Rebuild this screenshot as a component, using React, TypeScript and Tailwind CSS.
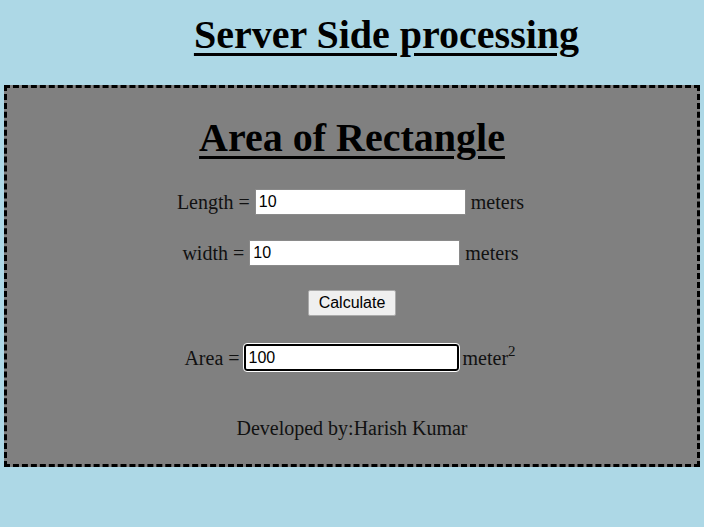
export default function App() {
  return (
    <div className="min-h-[527px] bg-[#add8e6] pt-[12px] pb-10 font-['Liberation_Serif',serif] text-black">
      <h1 className="pl-[69px] text-center text-[40px] font-bold leading-[46px] underline decoration-[3px] underline-offset-[5px]">
        Server Side processing
      </h1>

      <div className="mx-1 mt-[27px] h-[382px] border-[3px] border-dashed border-black bg-[#808080] pt-[27px]">
        <h2 className="text-center text-[40px] font-bold leading-[46px] underline decoration-[3px] underline-offset-[5px]">
          Area of Rectangle
        </h2>

        <div className="mt-[28px] flex h-[26px] items-center justify-center gap-[5px] pr-[3px] text-[20px] text-[#111]">
          <span>Length =</span>
          <input
            defaultValue="10"
            className="h-[26px] w-[211px] border border-[#8a8a8a] bg-white px-[3px] font-['Liberation_Sans',sans-serif] text-[16px] text-black outline-none"
          />
          <span>meters</span>
        </div>

        <div className="mt-[25px] flex h-[26px] items-center justify-center gap-[5px] pr-[3px] text-[20px] text-[#111]">
          <span>width =</span>
          <input
            defaultValue="10"
            className="h-[26px] w-[211px] border border-[#8a8a8a] bg-white px-[3px] font-['Liberation_Sans',sans-serif] text-[16px] text-black outline-none"
          />
          <span>meters</span>
        </div>

        <div className="mt-[24px] flex justify-center">
          <button className="h-[26px] w-[88px] rounded-[2px] border border-[#aaa] bg-[#efefef] font-['Liberation_Sans',sans-serif] text-[16px] text-black">
            Calculate
          </button>
        </div>

        <div className="mt-[28px] flex h-[27px] items-center justify-center gap-[4px] pr-[4px] text-[20px] text-[#111]">
          <span>Area =</span>
          <input
            defaultValue="100"
            className="h-[27px] w-[215px] rounded-[3px] border-2 border-black bg-white px-[3px] font-['Liberation_Sans',sans-serif] text-[16px] text-black outline outline-1 outline-white"
          />
          <span>
            meter<sup className="-top-[9px] text-[15px]">2</sup>
          </span>
        </div>

        <p className="mt-[46px] text-center text-[20px] leading-[23px] text-[#111]">Developed by:Harish Kumar</p>
      </div>
    </div>
  )
}
